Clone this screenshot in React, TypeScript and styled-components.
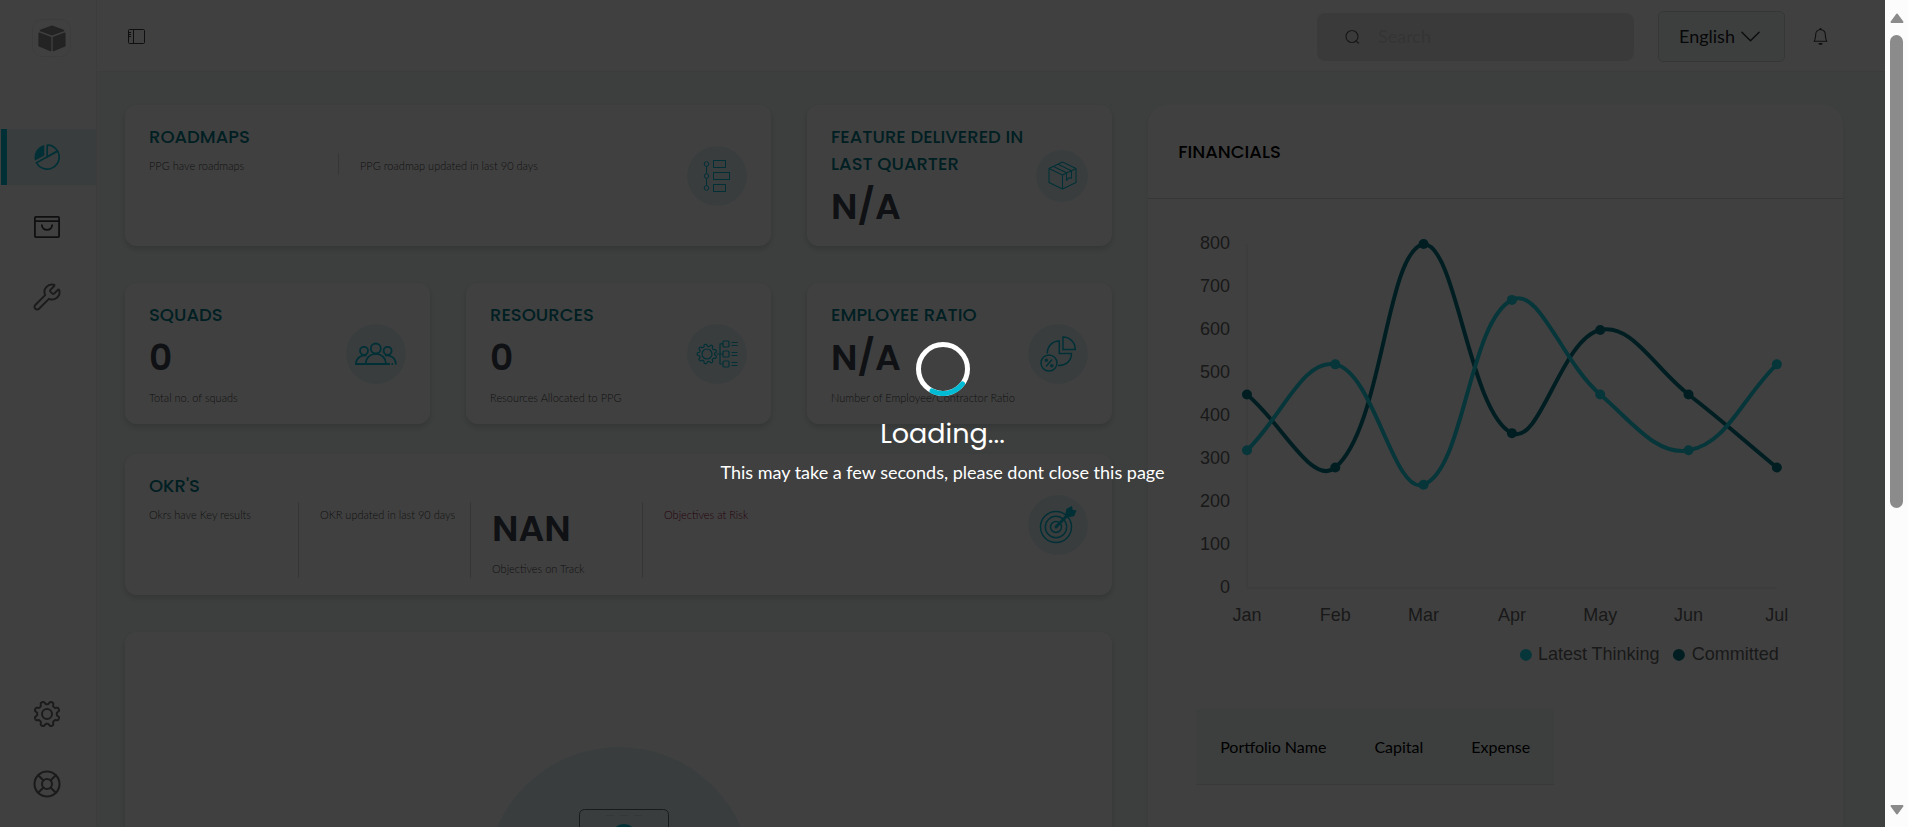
import React from "react";
import styled, { createGlobalStyle } from "styled-components";
import { LifeBuoy, Wrench } from "lucide-react";
import { BsBell, BsChevronDown } from "react-icons/bs";

const color = {
  accent: "#00bcd4",
  title: "#007b8a",
  number: "#3c4650",
  label: "#484848",
  page: "#f3fbf8",
  tint: "#e4f4f8",
  line: "#d4d8d8",
};

const heading = `Poppins, Inter, "Open Sans", sans-serif`;

const GlobalStyle = createGlobalStyle`
  *, *::before, *::after { box-sizing: border-box; }
  body {
    margin: 0;
    font-family: Lato, "Open Sans", sans-serif;
    color: #000;
    background: #fff;
  }
  h1, h2, p { margin: 0; font-weight: 400; }
`;

/* ---------- shell ---------- */

const Screen = styled.div`
  display: flex;
  height: 100vh;
  overflow: hidden;
`;

const Viewport = styled.div`
  position: relative;
  display: flex;
  flex: 1;
  min-width: 0;
  background: ${color.page};
`;

const Sidebar = styled.nav`
  display: flex;
  flex-direction: column;
  flex: none;
  width: 97px;
  padding: 19px 0 15px;
  background: #fff;
  border-right: 1px solid #f0f0f0;
`;

const Logo = styled.a`
  display: grid;
  place-items: center;
  width: 39px;
  height: 38px;
  margin: 0 0 72px 32px;
  border: 1px solid #f0f0f0;
  border-radius: 10px;
`;

const NavList = styled.div`
  display: flex;
  flex-direction: column;
  gap: 14px;

  &:last-child { margin-top: auto; }
`;

const NavItem = styled.a<{ $active?: boolean }>`
  display: grid;
  place-items: center;
  height: 56px;
  margin-left: 1px;
  padding-right: ${(p) => (p.$active ? 10 : 4)}px;
  color: ${(p) => (p.$active ? color.accent : "#6c6c6c")};
  background: ${(p) => (p.$active ? color.tint : "transparent")};
  border-left: ${(p) => (p.$active ? `6px solid ${color.accent}` : "0")};
`;

const Content = styled.div`
  display: flex;
  flex-direction: column;
  flex: 1;
  min-width: 0;
`;

const Header = styled.header`
  display: flex;
  align-items: center;
  flex: none;
  height: 72px;
  padding: 2px 53px 0 28px;
  background: #fff;
  border-bottom: 1px solid #f0f0f0;
`;

const IconButton = styled.button`
  display: grid;
  place-items: center;
  padding: 0 3px;
  border: 0;
  background: none;
  color: #3c3c46;
`;

const Search = styled.label`
  display: flex;
  align-items: center;
  gap: 18px;
  width: 317px;
  height: 48px;
  margin: 0 24px 0 auto;
  padding: 0 28px;
  background: #e8e8e8;
  border-radius: 8px;
`;

const SearchInput = styled.input`
  flex: 1;
  min-width: 0;
  padding: 0;
  border: 0;
  outline: 0;
  background: none;
  font: 400 18px/27px Lato, sans-serif;

  &::placeholder { color: #cfcfcf; opacity: 1; }
`;

const Language = styled.div`
  position: relative;
  margin-right: 24px;

  svg {
    position: absolute;
    top: 14px;
    right: 23px;
    pointer-events: none;
  }
`;

const LanguageSelect = styled.select`
  width: 127px;
  height: 51px;
  padding: 0 44px 0 20px;
  appearance: none;
  border: 1px solid #d4dcdc;
  border-radius: 5px;
  background: ${color.page};
  color: #202028;
  font: 400 18px/27px Lato, sans-serif;
`;

/* ---------- dashboard ---------- */

const Main = styled.main`
  display: grid;
  grid-template-columns: repeat(12, minmax(0, 1fr));
  gap: 36px;
  flex: 1;
  min-height: 0;
  padding: 33px 42px 0 28px;
  overflow: hidden;
`;

const Stats = styled.div`
  grid-column: span 7;
  display: flex;
  flex-direction: column;
`;

const Row = styled.div<{ $gap: number }>`
  display: grid;
  grid-template-columns: repeat(3, minmax(0, 1fr));
  gap: 36px;
  margin-bottom: ${(p) => p.$gap}px;
`;

const Card = styled.section<{ $span?: number }>`
  grid-column: span ${(p) => p.$span ?? 1};
  display: flex;
  align-items: center;
  min-height: 141px;
  padding: 18px 24px;
  background: #fff;
  border-radius: 12px;
  box-shadow: 0 3px 6px rgba(0, 0, 0, 0.16);
`;

const CardBody = styled.div`
  flex: 1;
  align-self: stretch;
  min-width: 0;
  height: 105px;
`;

const CardTitle = styled.h2`
  color: ${color.title};
  font: 500 18px/27px ${heading};
`;

const Value = styled.p`
  margin-top: 3px;
  color: ${color.number};
  font: 600 36px/54px ${heading};
`;

const Label = styled.p<{ $risk?: boolean }>`
  margin-top: 4px;
  color: ${(p) => (p.$risk ? "#980030" : color.label)};
  font-size: 11px;
  font-weight: 300;
  line-height: 18px;
  white-space: nowrap;
`;

const Columns = styled.div<{ $first: number }>`
  display: grid;
  grid-template-columns: ${(p) => p.$first}px;
  grid-auto-flow: column;
  grid-auto-columns: 172px;
  margin-top: 3px;

  > div + div {
    margin-left: -1px;
    padding-left: 21px;
    border-left: 1px solid ${color.line};
  }
  ${Value} { margin-top: 0; }
`;

const Badge = styled.div<{ $size: number }>`
  display: grid;
  place-items: center;
  flex: none;
  width: ${(p) => p.$size}px;
  height: ${(p) => p.$size}px;
  border-radius: 50%;
  background: ${color.tint};
  color: ${color.accent};
`;

const EmptyCard = styled.section`
  display: flex;
  justify-content: center;
  min-height: 420px;
  padding-top: 115px;
  background: #fff;
  border-radius: 12px;
  box-shadow: 0 3px 6px rgba(0, 0, 0, 0.16);
`;

/* ---------- financials ---------- */

const Financials = styled.section`
  grid-column: span 5;
  min-height: 900px;
  background: #fff;
  border-radius: 20px;
  box-shadow: 0 3px 6px rgba(0, 0, 0, 0.08);
`;

const FinancialsHead = styled.div`
  padding: 33px 30px;
  border-bottom: 1px solid ${color.line};
`;

const FinancialsTitle = styled.h2`
  color: #000;
  font: 500 18px/27px ${heading};
`;

const FinancialsBody = styled.div`
  padding: 23px 24px;
`;

const Chart = styled.svg`
  display: block;
  width: 100%;
  height: auto;
  font-family: Arial, "Liberation Sans", sans-serif;
  font-size: 18px;
  fill: #666;
`;

const Table = styled.table`
  margin: 27px 0 0 24px;
  border-collapse: collapse;
  background: ${color.page};

  th {
    height: 76px;
    padding: 0 24px;
    border-bottom: 1px solid #e0e8e8;
    font-size: 16px;
    font-weight: 400;
    line-height: 24px;
    white-space: nowrap;
  }
`;

/* ---------- overlay and scrollbar ---------- */

const Overlay = styled.div`
  position: absolute;
  inset: 0;
  display: flex;
  flex-direction: column;
  align-items: center;
  justify-content: center;
  background: rgba(0, 0, 0, 0.75);
  color: #fff;
`;

const LoadingTitle = styled.h1`
  margin: 17px 0 4px;
  font: 400 27px/42px ${heading};
`;

const LoadingText = styled.p`
  font-size: 18px;
  line-height: 27px;
`;

const ScrollTrack = styled.div`
  display: flex;
  flex-direction: column;
  align-items: center;
  flex: none;
  width: 23px;
  padding: 13px 0 12px;
  background: #fcfcfc;
`;

const Thumb = styled.div`
  width: 13px;
  height: 59%;
  margin: 12px 0 auto;
  border-radius: 7px;
  background: #8b8b8b;
`;

/* ---------- drawings ---------- */

function gearPath(cx: number, cy: number, inner: number, outer: number, teeth: number) {
  const steps = teeth * 16;
  const mid = (inner + outer) / 2;
  const amp = (outer - inner) / 2;
  const pts: string[] = [];
  for (let i = 0; i < steps; i++) {
    const a = (i / steps) * Math.PI * 2;
    const wave = Math.tanh(2.2 * Math.cos(teeth * a + Math.PI)) / Math.tanh(2.2);
    const r = mid + amp * wave;
    pts.push(`${(cx + r * Math.cos(a)).toFixed(2)} ${(cy + r * Math.sin(a)).toFixed(2)}`);
  }
  return `M${pts.join("L")}Z`;
}

const CubeLogo = () => (
  <svg width="28" height="27" viewBox="0 0 28 27" fill="#8c8c8c" stroke="#8c8c8c" strokeWidth="1.6" strokeLinejoin="round">
    <path d="M2.4 5.4 14 1.2l11.6 4.2L14 9.8z" />
    <path d="M1.2 8.2 12.6 12.4V25.6L1.2 20.8z" />
    <path d="M26.8 8.2 15.4 12.4V25.6L26.8 20.8z" />
  </svg>
);

const PieIcon = () => (
  <svg width="26" height="26" viewBox="0 0 26 26" fill="none" stroke="currentColor" strokeWidth="1.7">
    <path d="M10.3.9V11.4L1 16.6C-.9 9.6 3.3 2.4 10.3.9z" fill="currentColor" stroke="none" />
    <path d="M13.2.9V12.9L23.6 7.1" />
    <path d="M13.2.9A12.1 12.1 0 1 1 2.5 18.8L23.6 7.1" />
  </svg>
);

const BagIcon = () => (
  <svg width="26" height="22" viewBox="0 0 26 22" fill="none" stroke="#3c3c44" strokeWidth="1.8">
    <rect x="0.9" y="0.9" width="24.2" height="20.2" rx="1" />
    <path d="M1 5.2h24M7.8 8.6c0 7 10.4 7 10.4 0" />
  </svg>
);

const GearIcon = () => (
  <svg width="28" height="28" viewBox="0 0 28 28" fill="none" stroke="currentColor" strokeWidth="2" strokeLinejoin="round">
    <path d={gearPath(14, 14, 9.8, 12.7, 8)} />
    <circle cx="14" cy="14" r="5" />
  </svg>
);

const PanelIcon = () => (
  <svg width="17" height="15" viewBox="0 0 17 15" fill="none" stroke="currentColor">
    <rect x="0.5" y="0.5" width="16" height="14" rx="1" />
    <path d="M5.5.5v14M1 3.5h2M1 5.5h2M1 7.5h2" />
  </svg>
);

const SearchIcon = () => (
  <svg width="15" height="15" viewBox="0 0 15 15" fill="none" stroke="#606060" strokeWidth="1.2">
    <circle cx="7" cy="7.5" r="6" />
    <path d="m10.5 11.5 3.5 3" />
  </svg>
);

const RoadmapIcon = () => (
  <svg width="28" height="33" viewBox="0 0 28 33" fill="none" stroke="currentColor" strokeWidth="1">
    <circle cx="3.5" cy="5" r="2.3" />
    <circle cx="3.5" cy="17" r="2.3" />
    <circle cx="3.5" cy="29" r="2.3" />
    <path d="M3.5 7.3v7.4M3.5 19.3v7.4" />
    <rect x="10.5" y="1.5" width="12" height="7" />
    <rect x="10.5" y="13.5" width="16" height="7" />
    <rect x="10.5" y="25.5" width="12" height="7" />
  </svg>
);

const PackageIcon = () => (
  <svg width="29" height="29" viewBox="0 0 29 29" fill="none" stroke="currentColor" strokeWidth="1.1" strokeLinejoin="round">
    <path d="M14.5 1 28 7.5v14L14.5 28 1 21.5v-14z" />
    <path d="M1 7.5 14.5 14 28 7.5M14.5 14v14M10 3.2l13.5 6.5M5.5 5.4 19 11.9M18.5 12v7.5l2.5-2.8 2.5 .6V9.6" />
  </svg>
);

const PeopleIcon = () => (
  <svg width="42" height="24" viewBox="0 0 42 24" fill="none" stroke="currentColor" strokeWidth="1.8">
    <circle cx="20.8" cy="6.5" r="5" />
    <circle cx="9" cy="8.8" r="4" />
    <circle cx="32.6" cy="8.8" r="4" />
    <path d="M35 22H1c0-6 5-9.4 10.6-8.4M10.8 22c0-13.5 20-13.5 20 0M30 13.6c6-1 11 2.8 10.8 9M36.5 22h1.5" />
  </svg>
);

const ResourceIcon = () => (
  <svg width="42" height="28" viewBox="0 0 42 28" fill="none" stroke="currentColor" strokeWidth="1.2" strokeLinejoin="round">
    <path d={gearPath(11, 14, 7.6, 9.8, 9)} />
    <circle cx="11" cy="14" r="5" />
    <path d="M20.5 14H27M27 3.8H24V24H27" />
    <rect x="27" y="1" width="6" height="6" rx="1" />
    <rect x="27" y="11" width="6" height="6" rx="1" />
    <rect x="27" y="21" width="6" height="6" rx="1" />
    <path d="M35.5 2.5h6M35.5 5.5h6M35.5 12.5h6M35.5 15.5h6M35.5 22.5h6M35.5 25.5h6" />
  </svg>
);

const RatioIcon = () => (
  <svg width="36" height="36" viewBox="0 0 36 36" fill="none" stroke="currentColor" strokeWidth="1.5">
    <path d="M23 1v12.5h12.3C35.3 6.5 30 1 23 1z" />
    <path d="M7.3 17.5C7.3 10.5 12 5 19.3 5v12.5h12.2c0 7.5-5.5 12-13.5 12" />
    <circle cx="9" cy="27" r="8" />
    <path d="m6 30.5 6-7" />
    <circle cx="6.3" cy="24.3" r="1" />
    <circle cx="11.8" cy="29.8" r="1" />
  </svg>
);

const TargetIcon = () => (
  <svg width="38" height="38" viewBox="0 0 38 38" fill="none" stroke="currentColor" strokeWidth="1.5">
    <circle cx="17" cy="21" r="15.5" />
    <circle cx="17" cy="21" r="10.7" />
    <circle cx="17" cy="21" r="5.5" />
    <path d="m17 21 13-13.5" strokeWidth="3" strokeLinecap="round" />
    <path d="m27 8.5 1-5 4.5-2.5.5 3.5 3.5.5-2 4.5-5 1z" fill="currentColor" />
  </svg>
);

const EmptyDrawing = () => (
  <svg width="266" height="266" viewBox="0 0 266 266" fill="none">
    <circle cx="133" cy="133" r="133" fill={color.tint} />
    <rect x="93.5" y="62.5" width="89" height="150" rx="5" stroke="#606c70" />
    <path d="M120 68.5h8m6 0h8m6 0h8" stroke="#d0dce0" />
    <circle cx="138" cy="90" r="13" fill={color.accent} />
  </svg>
);

/* ---------- chart ---------- */

const months = ["Jan", "Feb", "Mar", "Apr", "May", "Jun", "Jul"];
const latest = [320, 520, 240, 670, 450, 320, 520];
const committed = [450, 280, 800, 360, 600, 450, 280];
const ticks = [800, 700, 600, 500, 400, 300, 200, 100, 0];

const plot = { left: 75, right: 605, top: 22, bottom: 366 };
const xAt = (i: number) => plot.left + (i * (plot.right - plot.left)) / (months.length - 1);
const yAt = (v: number) => plot.bottom - (v * (plot.bottom - plot.top)) / 800;
const clampY = (y: number) => Math.min(plot.bottom, Math.max(plot.top, y));

/* Spline with a tension of 0.4 whose handles stay inside the plot. */
function curve(values: number[]) {
  const pts = values.map((v, i) => ({ x: xAt(i), y: yAt(v) }));
  const handles = pts.map((cur, i) => {
    const prev = pts[i - 1] ?? cur;
    const next = pts[i + 1] ?? cur;
    const before = Math.hypot(cur.x - prev.x, cur.y - prev.y);
    const after = Math.hypot(next.x - cur.x, next.y - cur.y);
    const a = (0.4 * before) / (before + after);
    const b = (0.4 * after) / (before + after);
    return {
      inX: cur.x - a * (next.x - prev.x),
      inY: clampY(cur.y - a * (next.y - prev.y)),
      outX: cur.x + b * (next.x - prev.x),
      outY: clampY(cur.y + b * (next.y - prev.y)),
    };
  });
  return pts
    .map((p, i) => {
      if (i === 0) return `M${p.x} ${p.y}`;
      const o = handles[i - 1];
      const h = handles[i];
      return `C${o.outX} ${o.outY} ${h.inX} ${h.inY} ${p.x} ${p.y}`;
    })
    .join("");
}

const Series = ({ values, stroke }: { values: number[]; stroke: string }) => (
  <g fill={stroke}>
    <path d={curve(values)} fill="none" stroke={stroke} strokeWidth="4" />
    {values.map((v, i) => (
      <circle key={i} cx={xAt(i)} cy={yAt(v)} r="5" />
    ))}
  </g>
);

const latestColor = "#18d4e6";
const committedColor = "#007a88";

const FinancialsChart = () => (
  <Chart viewBox="0 0 647 460" role="img" aria-label="Financials from January to July">
    <path d="M75 22V366H605" fill="none" stroke="#e4e4e4" strokeWidth="1" />
    {ticks.map((t) => (
      <text key={t} x="58" y={yAt(t) + 5} textAnchor="end">{t}</text>
    ))}
    {months.map((m, i) => (
      <text key={m} x={xAt(i)} y="399" textAnchor="middle">{m}</text>
    ))}
    <Series values={committed} stroke={committedColor} />
    <Series values={latest} stroke={latestColor} />
    <circle cx="354" cy="433" r="6" fill={latestColor} />
    <text x="366" y="438">Latest Thinking</text>
    <circle cx="507" cy="433" r="6" fill={committedColor} />
    <text x="520" y="438">Committed</text>
  </Chart>
);

/* ---------- page ---------- */

interface StatProps {
  title: string;
  value: string;
  label?: string;
  size?: number;
  icon: React.ReactNode;
}

const Stat = ({ title, value, label, size = 60, icon }: StatProps) => (
  <Card>
    <CardBody>
      <CardTitle>{title}</CardTitle>
      <Value>{value}</Value>
      {label && <Label>{label}</Label>}
    </CardBody>
    <Badge $size={size}>{icon}</Badge>
  </Card>
);

export default function App() {
  return (
    <>
      <GlobalStyle />
      <Screen>
        <Viewport>
          <Sidebar aria-label="Main">
            <Logo href="#home" aria-label="Home"><CubeLogo /></Logo>
            <NavList>
              <NavItem href="#dashboard" aria-label="Dashboard" $active><PieIcon /></NavItem>
              <NavItem href="#products" aria-label="Products"><BagIcon /></NavItem>
              <NavItem href="#tools" aria-label="Tools"><Wrench size={30} strokeWidth={1.6} /></NavItem>
            </NavList>
            <NavList>
              <NavItem href="#settings" aria-label="Settings"><GearIcon /></NavItem>
              <NavItem href="#help" aria-label="Help"><LifeBuoy size={30} strokeWidth={1.7} /></NavItem>
            </NavList>
          </Sidebar>

          <Content>
            <Header>
              <IconButton aria-label="Toggle sidebar"><PanelIcon /></IconButton>
              <Search>
                <SearchIcon />
                <SearchInput type="search" placeholder="Search" aria-label="Search" />
              </Search>
              <Language>
                <LanguageSelect aria-label="Language">
                  <option>English</option>
                </LanguageSelect>
                <BsChevronDown size={23} color="#30303a" />
              </Language>
              <IconButton aria-label="Notifications"><BsBell size={17} /></IconButton>
            </Header>

            <Main>
              <Stats>
                <Row $gap={37}>
                  <Card $span={2}>
                    <CardBody>
                      <CardTitle>ROADMAPS</CardTitle>
                      <Columns $first={190}>
                        <div><Label>PPG have roadmaps</Label></div>
                        <div><Label>PPG roadmap updated in last 90 days</Label></div>
                      </Columns>
                    </CardBody>
                    <Badge $size={60}><RoadmapIcon /></Badge>
                  </Card>
                  <Stat title="FEATURE DELIVERED IN LAST QUARTER" value="N/A" size={52} icon={<PackageIcon />} />
                </Row>
                <Row $gap={30}>
                  <Stat title="SQUADS" value="0" label="Total no. of squads" icon={<PeopleIcon />} />
                  <Stat title="RESOURCES" value="0" label="Resources Allocated to PPG" icon={<ResourceIcon />} />
                  <Stat title="EMPLOYEE RATIO" value="N/A" label="Number of Employee/Contractor Ratio" icon={<RatioIcon />} />
                </Row>
                <Row $gap={37}>
                  <Card $span={3}>
                    <CardBody>
                      <CardTitle>OKR'S</CardTitle>
                      <Columns $first={150}>
                        <div><Label>Okrs have Key results</Label></div>
                        <div><Label>OKR updated in last 90 days</Label></div>
                        <div>
                          <Value>NAN</Value>
                          <Label>Objectives on Track</Label>
                        </div>
                        <div><Label $risk>Objectives at Risk</Label></div>
                      </Columns>
                    </CardBody>
                    <Badge $size={60}><TargetIcon /></Badge>
                  </Card>
                </Row>
                <EmptyCard><EmptyDrawing /></EmptyCard>
              </Stats>

              <Financials>
                <FinancialsHead><FinancialsTitle>FINANCIALS</FinancialsTitle></FinancialsHead>
                <FinancialsBody>
                  <FinancialsChart />
                  <Table>
                    <thead>
                      <tr>
                        <th scope="col">Portfolio Name</th>
                        <th scope="col">Capital</th>
                        <th scope="col">Expense</th>
                      </tr>
                    </thead>
                  </Table>
                </FinancialsBody>
              </Financials>
            </Main>
          </Content>

          <Overlay role="status">
            <svg width="54" height="54" viewBox="0 0 54 54" fill="none" strokeWidth="5">
              <circle cx="27" cy="27" r="24.5" stroke="#fff" />
              <path d="M46.5 41.8A24.5 24.5 0 0 1 16 48.9" stroke={color.accent} strokeLinecap="round" />
            </svg>
            <LoadingTitle>Loading...</LoadingTitle>
            <LoadingText>This may take a few seconds, please dont close this page</LoadingText>
          </Overlay>
        </Viewport>

        <ScrollTrack aria-hidden="true">
          <svg width="14" height="10" viewBox="0 0 14 10" fill="#8b8b8b" stroke="#8b8b8b" strokeWidth="2" strokeLinejoin="round">
            <path d="M7 1.5 12.5 9h-11z" />
          </svg>
          <Thumb />
          <svg width="14" height="10" viewBox="0 0 14 10" fill="#8b8b8b" stroke="#8b8b8b" strokeWidth="2" strokeLinejoin="round">
            <path d="M7 8.5 12.5 1h-11z" />
          </svg>
        </ScrollTrack>
      </Screen>
    </>
  );
}
